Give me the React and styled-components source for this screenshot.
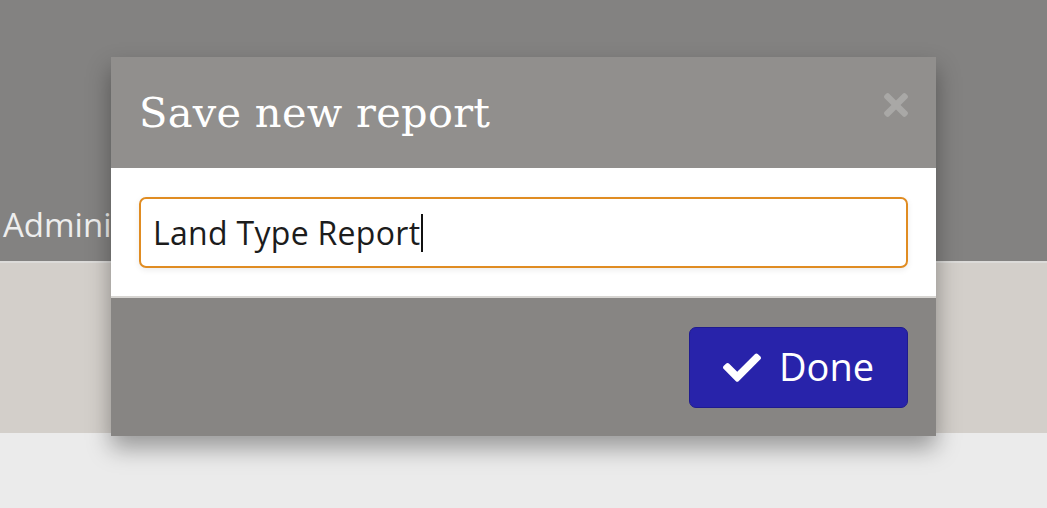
import styled, { createGlobalStyle } from "styled-components";

const Global = createGlobalStyle`
  html, body {
    margin: 0;
    padding: 0;
    background: #ebebeb;
    font-family: "Open Sans", "Noto Sans", sans-serif;
  }
`;

const Page = styled.div`
  height: 508px;
  display: flex;
  flex-direction: column;
  overflow: hidden;
`;

const TopBand = styled.div`
  height: 263px;
  background: #838281;
  border-bottom: 2px solid #dcdbd9;
  display: flex;
  align-items: flex-end;
  padding: 0 0 20px 3px;
  box-sizing: border-box;
`;

const NavLabel = styled.span`
  color: #eeeeee;
  font-size: 33px;
  line-height: 1;
`;

const Band = styled.div`
  height: 170px;
  background: #d3cfca;
`;

const Modal = styled.div`
  position: fixed;
  left: 111px;
  top: 57px;
  width: 825px;
  display: flex;
  flex-direction: column;
  box-shadow: 0 12px 22px rgba(0, 0, 0, 0.35);
`;

const Header = styled.div`
  height: 111px;
  background: #918f8d;
  display: flex;
  align-items: center;
  justify-content: space-between;
  padding: 0 28px 0 28px;
  box-sizing: border-box;
`;

const Title = styled.h2`
  margin: 0;
  color: #ffffff;
  font-family: "DejaVu Serif", "Liberation Serif", serif;
  font-weight: normal;
  font-size: 41.5px;
  letter-spacing: 0.3px;
`;

const Close = styled.button`
  border: 0;
  background: none;
  padding: 0;
  margin-top: -16px;
  display: flex;
  color: #a9a8a6;
`;

const Body = styled.div`
  background: #ffffff;
  padding: 29px 28px 28px 28px;
  border-bottom: 2px solid #d7d5d2;
`;

const Input = styled.div`
  height: 71px;
  box-sizing: border-box;
  border: 2px solid #e08c22;
  border-radius: 7px;
  display: flex;
  align-items: center;
  padding: 0 12px;
  font-size: 32px;
  letter-spacing: 0.3px;
  color: #1c1c1c;
  box-shadow: 0 2px 6px rgba(0, 0, 0, 0.08);
`;

const Caret = styled.span`
  display: inline-block;
  width: 2px;
  height: 38px;
  background: #111;
  margin-left: 1px;
`;

const Footer = styled.div`
  height: 138px;
  background: #878583;
  display: flex;
  justify-content: flex-end;
  align-items: flex-start;
  padding: 29px 28px 0 0;
  box-sizing: border-box;
`;

const DoneButton = styled.button`
  width: 219px;
  height: 81px;
  border: 1px solid #1f1b8f;
  border-radius: 7px;
  background: #2823aa;
  color: #ffffff;
  font-family: "Open Sans", "Noto Sans", sans-serif;
  font-size: 38px;
  display: flex;
  align-items: center;
  justify-content: center;
  gap: 18px;
  padding: 0 0 4px 0;
`;

const Check = () => (
  <svg width="38" height="32" viewBox="0 0 512 430" fill="#fff">
    <path d="M173.9 419.2L7.5 252.8c-10-10-10-26.2 0-36.2l36.2-36.2c10-10 26.2-10 36.2 0L192 292.5 432.1 52.4c10-10 26.2-10 36.2 0l36.2 36.2c10 10 10 26.2 0 36.2L210.1 419.2c-10 10-26.2 10-36.2 0z" />
  </svg>
);

const Times = () => (
  <svg width="24" height="26" viewBox="0 0 352 380" fill="currentColor">
    <path d="M242.7 190l100-100c12.3-12.3 12.3-32.2 0-44.5l-22.2-22.2c-12.3-12.3-32.2-12.3-44.5 0L176 123.3 76 23.3c-12.3-12.3-32.2-12.3-44.5 0L9.3 45.5c-12.3 12.3-12.3 32.2 0 44.5l100 100-100 100c-12.3 12.3-12.3 32.2 0 44.5l22.2 22.2c12.3 12.3 32.2 12.3 44.5 0l100-100 100 100c12.3 12.3 32.2 12.3 44.5 0l22.2-22.2c12.3-12.3 12.3-32.2 0-44.5L242.7 190z" />
  </svg>
);

export default function App() {
  return (
    <>
      <Global />
      <Page>
        <TopBand>
          <NavLabel>Administration</NavLabel>
        </TopBand>
        <Band />
      </Page>
      <Modal>
        <Header>
          <Title>Save new report</Title>
          <Close aria-label="Close">
            <Times />
          </Close>
        </Header>
        <Body>
          <Input>
            Land Type Report
            <Caret />
          </Input>
        </Body>
        <Footer>
          <DoneButton>
            <Check />
            Done
          </DoneButton>
        </Footer>
      </Modal>
    </>
  );
}
